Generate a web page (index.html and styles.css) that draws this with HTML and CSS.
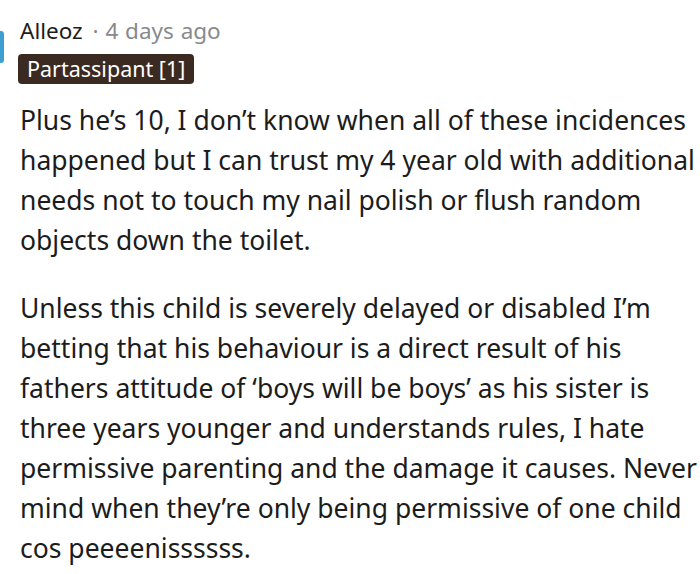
FILE: index.html
```html
<!DOCTYPE html>
<html>
<head>
<meta charset="utf-8">
<link rel="stylesheet" href="styles.css">
</head>
<body>
<div class="comment">
  <div class="avatar"></div>
  <div class="content">
    <div class="meta">
      <span class="author">Alleoz</span>
      <span class="time">· 4 days ago</span>
    </div>
    <div class="flair-row"><span class="flair">Partassipant [1]</span></div>
    <div class="body">
      <p>Plus he’s 10, I don’t know when all of these incidences happened but I can trust my 4 year old with additional needs not to touch my nail polish or flush random objects down the toilet.</p>
      <p>Unless this child is severely delayed or disabled I’m betting that his behaviour is a direct result of his fathers attitude of ‘boys will be boys’ as his sister is three years younger and understands rules, I hate permissive parenting and the damage it causes. Never mind when they’re only being permissive of one child cos peeeenissssss.</p>
    </div>
  </div>
</div>
</body>
</html>
```
FILE: styles.css
```css
html, body {
  margin: 0;
  padding: 0;
  background: #ffffff;
}
body {
  font-family: "Noto Sans", "Open Sans", sans-serif;
  color: #1c1c1c;
}
.comment {
  display: flex;
  align-items: flex-start;
}
.avatar {
  flex: none;
  width: 4px;
  height: 32px;
  margin-top: 31px;
  background: #3d9fd0;
  border-radius: 0 3px 3px 0;
}
.content {
  margin-left: 16px;
  flex: 1;
  min-width: 0;
}
.meta {
  margin-top: 17px;
  font-size: 22.5px;
  line-height: 28px;
  white-space: nowrap;
}
.author {
  color: #1c1c1c;
}
.time {
  color: #878a8c;
  margin-left: 4px;
  word-spacing: 1px;
}
.flair-row {
  margin-top: 9px;
  margin-left: -2px;
  display: flex;
}
.flair {
  background: #3b2a22;
  color: #ffffff;
  font-size: 21.5px;
  line-height: 30px;
  padding: 0 9px;
  border-radius: 4px;
}
.body {
  margin-top: 16px;
  font-size: 26.5px;
  line-height: 40px;
}
.body p {
  margin: 0 0 28px 0;
}
```
